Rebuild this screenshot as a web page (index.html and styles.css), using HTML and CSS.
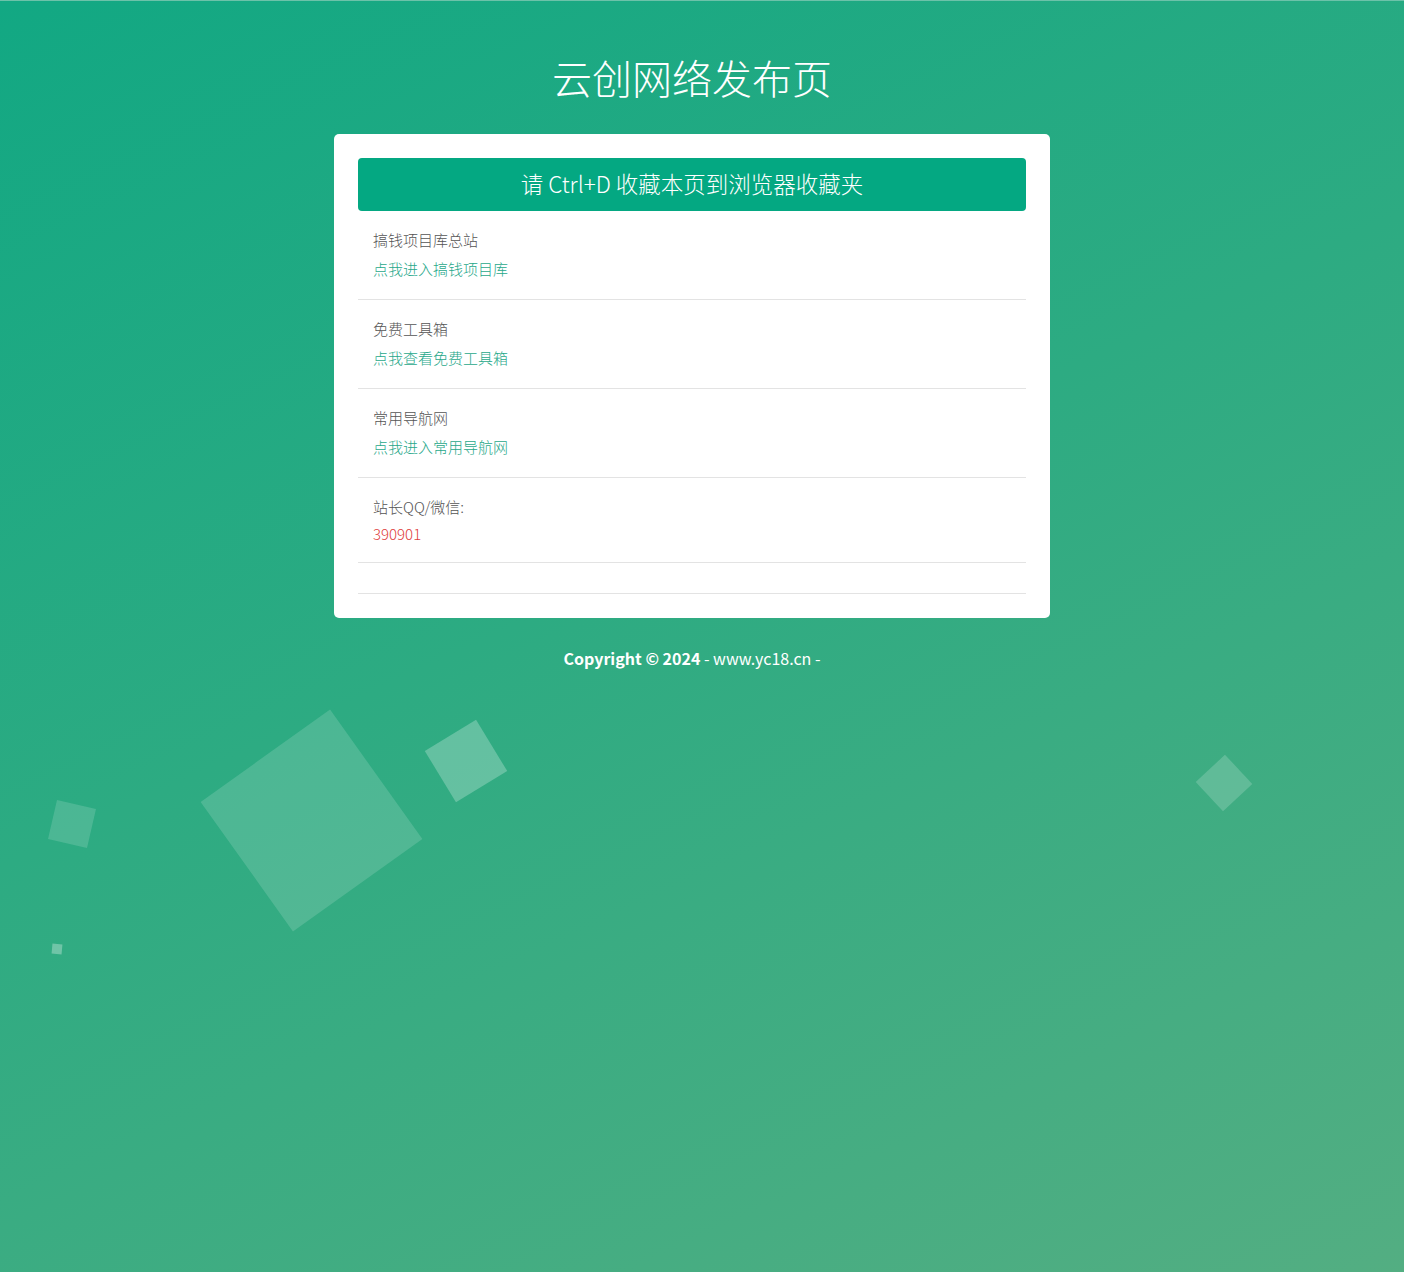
FILE: index.html
```html
<!DOCTYPE html>
<html lang="zh-CN">
<head>
<meta charset="utf-8">
<title>云创网络发布页</title>
<link rel="stylesheet" href="styles.css">
</head>
<body>
<div class="bg">
  <div class="page">
    <h1 class="title">云创网络发布页</h1>
    <div class="card">
      <div class="banner">请 Ctrl+D 收藏本页到浏览器收藏夹</div>
      <ul class="list">
        <li class="item">
          <div class="label">搞钱项目库总站</div>
          <a class="link" href="#">点我进入搞钱项目库</a>
        </li>
        <li class="item">
          <div class="label">免费工具箱</div>
          <a class="link" href="#">点我查看免费工具箱</a>
        </li>
        <li class="item">
          <div class="label">常用导航网</div>
          <a class="link" href="#">点我进入常用导航网</a>
        </li>
        <li class="item">
          <div class="label">站长QQ/微信:</div>
          <div class="value">390901</div>
        </li>
        <li class="item empty"></li>
      </ul>
    </div>
    <p class="footer"><b>Copyright © 2024</b> - www.yc18.cn -</p>
  </div>
  <ul class="bubbles">
    <li class="sq sq1"></li>
    <li class="sq sq2"></li>
    <li class="sq sq3"></li>
    <li class="sq sq4"></li>
    <li class="sq sq5"></li>
  </ul>
</div>
</body>
</html>
```
FILE: styles.css
```css
* { box-sizing: border-box; }
html, body {
  margin: 0;
  padding: 0;
  height: 100%;
}
body {
  font-family: "Noto Sans CJK SC", "Noto Sans", sans-serif;
}
.bg {
  position: relative;
  min-height: 1272px;
  overflow: hidden;
  border-top: 1px solid #6cc2a9;
  background: linear-gradient(155deg, #12a883 0%, #2dab82 45%, #53ae82 100%);
}
.page {
  padding-right: 20px;
  position: relative;
  z-index: 2;
}
.title {
  margin: 0;
  padding-top: 49px;
  height: 133px;
  text-align: center;
  color: #fff;
  font-size: 40px;
  font-weight: 300;
  line-height: 54px;
}
.card {
  width: 716px;
  margin: 0 auto;
  background: #fff;
  border-radius: 5px;
  padding: 24px;
}
.banner {
  height: 53px;
  background: #04a882;
  border-radius: 4px;
  color: #fff;
  text-align: center;
  font-size: 22.5px;
  font-weight: 300;
  line-height: 50px;
  padding-bottom: 3px;
}
.list {
  list-style: none;
  margin: 0;
  padding: 0;
}
.item {
  padding: 15px 15px;
  border-bottom: 1px solid #e3e3e3;
  font-size: 15px;
}
.label {
  color: #555;
  line-height: 28px;
  font-weight: 300;
}
.link {
  display: block;
  color: #1fa88a;
  text-decoration: none;
  line-height: 30px;
  font-weight: 300;
}
.value {
  color: #e03c3c;
  line-height: 26px;
  font-weight: 300;
  font-size: 15px;
}
.item.empty { height: 31px; padding: 0; }
.footer {
  margin: 28px 0 0;
  text-align: center;
  color: #fff;
  font-size: 16px;
  line-height: 24px;
}
.footer b { font-weight: 700; }
.bubbles {
  list-style: none;
  margin: 0;
  padding: 0;
  position: absolute;
  inset: 0;
  z-index: 1;
}
.sq {
  position: absolute;
  background: rgba(255, 255, 255, 0.15);
}
.sq1 {
  width: 159px; height: 159px;
  left: 231.5px; top: 739.5px;
  transform: rotate(54.5deg);
}
.sq2 {
  width: 60px; height: 60px;
  left: 436px; top: 730px;
  transform: rotate(58.7deg);
  background: rgba(255, 255, 255, 0.25);
}
.sq3 {
  width: 40px; height: 40px;
  left: 52px; top: 803px;
  transform: rotate(13deg);
}
.sq4 {
  width: 10px; height: 10px;
  left: 52px; top: 943px;
  transform: rotate(5deg);
  background: rgba(255, 255, 255, 0.3);
}
.sq5 {
  width: 40px; height: 40px;
  left: 1204px; top: 762px;
  transform: rotate(47deg);
  background: rgba(255, 255, 255, 0.18);
}
```
